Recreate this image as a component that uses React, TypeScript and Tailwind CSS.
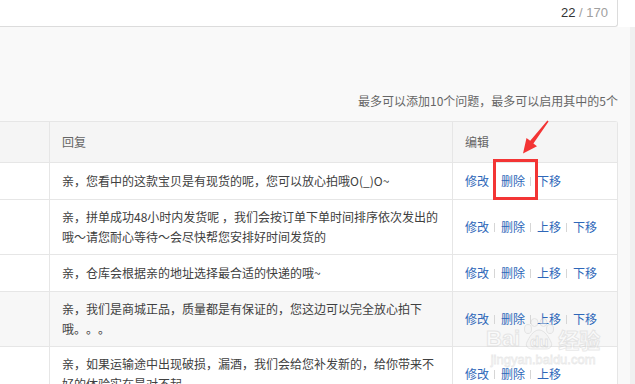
import { FC } from 'react';

type Row = { text: string; actions: string[]; tall?: boolean; shaded?: boolean };

const rows: Row[] = [
  { text: '亲，您看中的这款宝贝是有现货的呢，您可以放心拍哦O(_)O~', actions: ['修改', '删除', '下移'] },
  {
    text: '亲，拼单成功48小时内发货呢 ，我们会按订单下单时间排序依次发出的哦～请您耐心等待～会尽快帮您安排好时间发货的',
    actions: ['修改', '删除', '上移', '下移'],
    tall: true,
  },
  { text: '亲，仓库会根据亲的地址选择最合适的快递的哦~', actions: ['修改', '删除', '上移', '下移'] },
  {
    text: '亲，我们是商城正品，质量都是有保证的，您这边可以完全放心拍下哦。。。',
    actions: ['修改', '删除', '上移', '下移'],
    tall: true,
    shaded: true,
  },
  {
    text: '亲，如果运输途中出现破损，漏酒，我们会给您补发新的，给你带来不好的体验实在是对不起',
    actions: ['修改', '删除', '上移'],
    tall: true,
  },
];

const font = { fontFamily: '"Noto Sans CJK SC", "Noto Sans", sans-serif' };

const Actions: FC<{ items: string[] }> = ({ items }) => (
  <div className="flex items-center">
    {items.map((a, i) => (
      <div key={a} className="flex items-center">
        {i > 0 && <span className="ml-[5px] mr-[6px] inline-block w-px h-[9px] bg-[#d6d6d6]" />}
        <span className="text-[#2e67b9]">{a}</span>
      </div>
    ))}
  </div>
);

// baidu jingyan watermark, very faint
const Watermark: FC = () => (
  <div className="absolute left-[486px] top-[316px] pointer-events-none select-none flex flex-col items-center opacity-45">
    <div className="flex items-end h-[34px]">
      <span className="text-[22px] leading-[22px] font-bold text-white [-webkit-text-stroke:1px_#cfcfcf] font-['Liberation_Sans']">
        Bai
      </span>
      <div className="relative w-[34px] h-[32px] mx-[2px]">
        <svg width="34" height="32" viewBox="0 0 34 32" className="absolute inset-0">
          <g fill="#f2f2f2" stroke="#cccccc" strokeWidth="1">
            <ellipse cx="6" cy="11" rx="3.5" ry="4.5" />
            <ellipse cx="12.5" cy="4.5" rx="3.5" ry="4" />
            <ellipse cx="21.5" cy="4.5" rx="3.5" ry="4" />
            <ellipse cx="28" cy="11" rx="3.5" ry="4.5" />
            <path d="M17 12 C11 12 7 20 5 24 C3 28 6 31 10 31 L24 31 C28 31 31 28 29 24 C27 20 23 12 17 12 Z" />
          </g>
        </svg>
        <span className="absolute left-0 right-0 bottom-[1px] text-center text-[15px] leading-[15px] font-bold text-white [-webkit-text-stroke:0.8px_#c4c4c4] font-['Liberation_Sans']">
          du
        </span>
      </div>
      <span className="text-[21px] leading-[22px] font-bold text-white [-webkit-text-stroke:1px_#cfcfcf]" style={font}>
        经验
      </span>
    </div>
    <span className="mt-[3px] text-[13px] leading-[14px] text-white [-webkit-text-stroke:0.8px_#d0d0d0] font-['Liberation_Sans']">
      jingyan.baidu.com
    </span>
  </div>
);

const App: FC = () => (
  <div
    className="relative w-[635px] h-[384px] overflow-hidden bg-[#f9f9f9] text-[12px] text-[#444] [text-spacing-trim:space-all]"
    style={font}
  >
    <div className="h-[27px] bg-white">
      <div className="w-[618px] h-[27px] border-b border-r border-[#dcdcdc] rounded-br-[3px] flex items-center justify-end pr-[9px] font-['Liberation_Sans'] text-[13px]">
        <span className="text-[#333]">22</span>
        <span className="text-[#a0a0a0]">&nbsp;/ 170</span>
      </div>
    </div>

    <div className="flex">
      <div className="w-[618px]">
        <p className="mt-[66px] h-[16px] leading-[16px] text-right text-[#666]">最多可以添加10个问题，最多可以启用其中的5个</p>

        <div className="mt-[12px] bg-white border-t border-r border-[#e6e6e6] rounded-tr-[3px]">
          <div className="flex h-[41px] bg-[#f5f5f5] border-b border-[#e6e6e6] text-[#666]">
            <div className="w-[50px] border-r border-[#e6e6e6]" />
            <div className="w-[403px] border-r border-[#e6e6e6] pl-[12px] flex items-center">回复</div>
            <div className="flex-1 pl-[12px] flex items-center">编辑</div>
          </div>
          {rows.map((r) => (
            <div
              key={r.text}
              className={`flex border-b border-[#e6e6e6] ${r.tall ? 'h-[55px]' : 'h-[37px]'} ${r.shaded ? 'bg-[#f7f7f7]' : 'bg-white'}`}
            >
              <div className="w-[50px] border-r border-[#e6e6e6]" />
              <div className="w-[403px] border-r border-[#e6e6e6] pl-[12px] pr-[10px] flex items-center">
                <p className="leading-[20px] text-[#404040]">{r.text}</p>
              </div>
              <div className="flex-1 pl-[12px] flex items-center">
                <Actions items={r.actions} />
              </div>
            </div>
          ))}
        </div>
      </div>
      <div className="flex-1 flex justify-end">
        <div className="w-[5px] h-[400px] bg-[#f0f0f0]" />
      </div>
    </div>

    <div className="absolute left-[493px] top-[159px] w-[45px] h-[41px] border-[3px] border-[#f33535] pointer-events-none" />
    <svg className="absolute inset-0 pointer-events-none" width="635" height="384">
      <polygon
        fill="#f33535"
        points="548.6,121.4 533.4,143.4 537,146.3 523,153.5 526.5,138 530.2,140.8 547.4,120.6"
      />
    </svg>

    <Watermark />
  </div>
);

export default App;
